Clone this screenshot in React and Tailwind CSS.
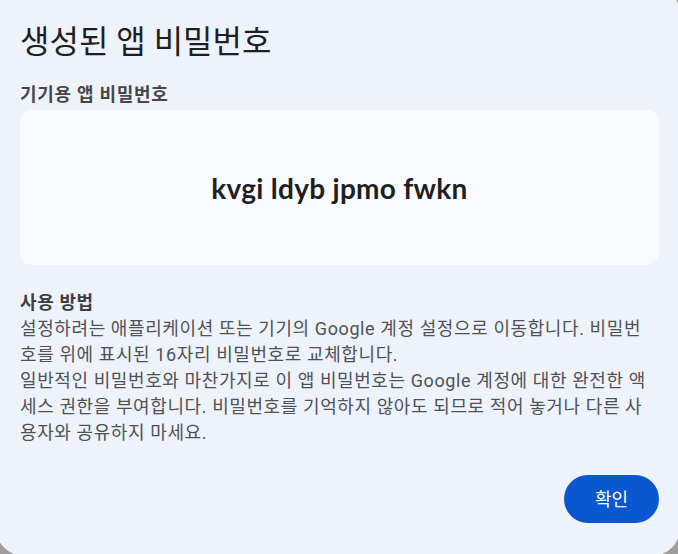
import React from "react";

const KR = { fontFamily: "Roboto, 'Noto Sans CJK KR', sans-serif" };

export default function App() {
  const lines1 = [
    "설정하려는 애플리케이션 또는 기기의 Google 계정 설정으로 이동합니다. 비밀번",
    "호를 위에 표시된 16자리 비밀번호로 교체합니다.",
  ];
  const lines2 = [
    "일반적인 비밀번호와 마찬가지로 이 앱 비밀번호는 Google 계정에 대한 완전한 액",
    "세스 권한을 부여합니다. 비밀번호를 기억하지 않아도 되므로 적어 놓거나 다른 사",
    "용자와 공유하지 마세요.",
  ];
  return (
    <div className="w-[678px] h-[554px] overflow-hidden bg-[#9e9e9e]" style={KR}>
      <div className="ml-[-4px] mt-[-14px] w-[684px] h-[570px] rounded-[28px] bg-[#eef2fb] pl-6 pr-[21px] pt-[38px] flex flex-col">
        <h1 className="text-[32px] leading-[36px] text-[#1f1f1f] font-normal whitespace-nowrap">
          생성된 앱 비밀번호
        </h1>
        <div className="mt-[23px] text-[18px] leading-[24px] font-bold tracking-[0.7px] text-[#444746] whitespace-nowrap">
          기기용 앱 비밀번호
        </div>
        <div className="mt-[3px] h-[155px] rounded-xl bg-[#f8faff] flex items-center justify-center">
          <span
            className="text-[28px] font-bold text-[#1f1f1f] tracking-[0.01em]"
            style={{ fontFamily: "Lato, sans-serif" }}
          >
            kvgi ldyb jpmo fwkn
          </span>
        </div>
        <div className="mt-[25px] text-[18px] leading-[26px] tracking-[0.6px] text-[#4f5254]">
          <div className="font-bold text-[#3c3e40]">사용 방법</div>
          {lines1.map((l) => (
            <div key={l} className="whitespace-nowrap">{l}</div>
          ))}
          {lines2.map((l) => (
            <div key={l} className="whitespace-nowrap">{l}</div>
          ))}
        </div>
        <div className="mt-[29px] flex justify-end">
          <button className="w-[95px] h-[48px] rounded-full bg-[#0b57d0] text-white text-[18px] font-normal">
            확인
          </button>
        </div>
      </div>
    </div>
  );
}
